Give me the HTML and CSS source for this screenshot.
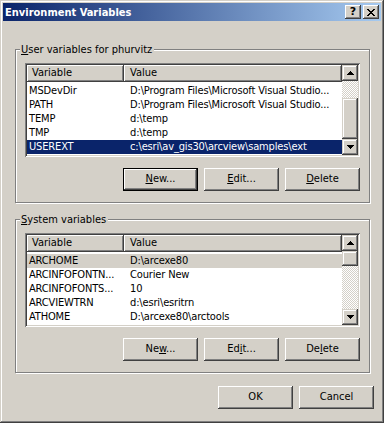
FILE: index.html
```html
<!DOCTYPE html>
<html lang="en">
<head>
    <meta charset="UTF-8">
    <link rel="stylesheet" href="styles.css">
    <title>Environment Variables</title>
</head>
<body>
    <div class="window">
        <div class="titlebar">
            <span class="title">Environment Variables</span>
            <div class="caption-buttons">
                <div class="caption-btn help">?</div>
                <div class="caption-btn">
                    <svg width="8" height="7" viewBox="0 0 8 7" shape-rendering="crispEdges">
                        <path d="M0 0h2v1H0zM6 0h2v1H6zM1 1h2v1H1zM5 1h2v1H5zM2 2h4v1H2zM3 3h2v1H3zM2 4h4v1H2zM1 5h2v1H1zM5 5h2v1H5zM0 6h2v1H0zM6 6h2v1H6z" fill="#000"/>
                    </svg>
                </div>
            </div>
        </div>

        <div class="client">
            <!-- User variables -->
            <div class="group">
                <div class="group-label"><span><u>U</u>ser variables for phurvitz</span></div>
                <div class="listview">
                    <div class="list-main">
                        <div class="list-header">
                            <div class="col-head col-var">Variable</div>
                            <div class="col-head col-val">Value</div>
                        </div>
                        <div class="list-row"><span class="cell var">MSDevDir</span><span class="cell val">D:\Program Files\Microsoft Visual Studio...</span></div>
                        <div class="list-row"><span class="cell var">PATH</span><span class="cell val">D:\Program Files\Microsoft Visual Studio...</span></div>
                        <div class="list-row"><span class="cell var">TEMP</span><span class="cell val">d:\temp</span></div>
                        <div class="list-row"><span class="cell var">TMP</span><span class="cell val">d:\temp</span></div>
                        <div class="list-row selected"><span class="cell var">USEREXT</span><span class="cell val">c:\esri\av_gis30\arcview\samples\ext</span></div>
                    </div>
                    <div class="scrollbar">
                        <div class="sb-btn">
                            <svg width="7" height="4" viewBox="0 0 7 4" shape-rendering="crispEdges"><path d="M3 0h1v1H3zM2 1h3v1H2zM1 2h5v1H1zM0 3h7v1H0z" fill="#000"/></svg>
                        </div>
                        <div class="sb-track track-user-top"></div>
                        <div class="sb-thumb thumb-user"></div>
                        <div class="sb-btn">
                            <svg width="7" height="4" viewBox="0 0 7 4" shape-rendering="crispEdges"><path d="M0 0h7v1H0zM1 1h5v1H1zM2 2h3v1H2zM3 3h1v1H3z" fill="#000"/></svg>
                        </div>
                    </div>
                </div>
                <div class="button-row">
                    <div class="btn default"><u>N</u>ew...</div>
                    <div class="btn"><u>E</u>dit...</div>
                    <div class="btn"><u>D</u>elete</div>
                </div>
            </div>

            <!-- System variables -->
            <div class="group system">
                <div class="group-label"><span><u>S</u>ystem variables</span></div>
                <div class="listview">
                    <div class="list-main">
                        <div class="list-header">
                            <div class="col-head col-var">Variable</div>
                            <div class="col-head col-val">Value</div>
                        </div>
                        <div class="list-row inactive"><span class="cell var">ARCHOME</span><span class="cell val">D:\arcexe80</span></div>
                        <div class="list-row"><span class="cell var">ARCINFOFONTN...</span><span class="cell val">Courier New</span></div>
                        <div class="list-row"><span class="cell var">ARCINFOFONTS...</span><span class="cell val">10</span></div>
                        <div class="list-row"><span class="cell var">ARCVIEWTRN</span><span class="cell val">d:\esri\esritrn</span></div>
                        <div class="list-row"><span class="cell var">ATHOME</span><span class="cell val">D:\arcexe80\arctools</span></div>
                    </div>
                    <div class="scrollbar">
                        <div class="sb-btn">
                            <svg width="7" height="4" viewBox="0 0 7 4" shape-rendering="crispEdges"><path d="M3 0h1v1H3zM2 1h3v1H2zM1 2h5v1H1zM0 3h7v1H0z" fill="#000"/></svg>
                        </div>
                        <div class="sb-thumb thumb-system"></div>
                        <div class="sb-track"></div>
                        <div class="sb-btn">
                            <svg width="7" height="4" viewBox="0 0 7 4" shape-rendering="crispEdges"><path d="M0 0h7v1H0zM1 1h5v1H1zM2 2h3v1H2zM3 3h1v1H3z" fill="#000"/></svg>
                        </div>
                    </div>
                </div>
                <div class="button-row">
                    <div class="btn">Ne<u>w</u>...</div>
                    <div class="btn">Ed<u>i</u>t...</div>
                    <div class="btn">De<u>l</u>ete</div>
                </div>
            </div>

            <div class="dialog-buttons">
                <div class="btn">OK</div>
                <div class="btn">Cancel</div>
            </div>
        </div>
    </div>
</body>
</html>
```

FILE: styles.css
```css
body {
    margin: 0;
    padding: 0;
    background: #d4d0c8;
    font-family: "DejaVu Sans Condensed", "DejaVu Sans", sans-serif;
    font-size: 11px;
    color: #000;
}

/* window frame */
.window {
    width: 384px;
    height: 423px;
    box-sizing: border-box;
    padding: 3px;
    background: #d4d0c8;
    box-shadow: inset -1px -1px #404040, inset 1px 1px #d4d0c8,
                inset -2px -2px #808080, inset 2px 2px #fff;
    display: flex;
    flex-direction: column;
}

.titlebar {
    height: 18px;
    display: flex;
    align-items: center;
    justify-content: space-between;
    background: linear-gradient(to right, #0a246a, #a6caf0);
}

.title {
    color: #fff;
    font-weight: bold;
    padding-left: 2px;
    line-height: 13px;
}

.caption-buttons {
    display: flex;
    gap: 1px;
    padding-right: 2px;
}

.caption-btn {
    width: 16px;
    height: 14px;
    box-sizing: border-box;
    background: #d4d0c8;
    box-shadow: inset -1px -1px #404040, inset 1px 1px #fff,
                inset -2px -2px #808080, inset 2px 2px #d4d0c8;
    display: flex;
    align-items: center;
    justify-content: center;
    margin-left: 1px;
}

.caption-btn.help {
    font-weight: bold;
    font-size: 11px;
    line-height: 14px;
    font-family: "DejaVu Sans", sans-serif;
}

.client {
    padding: 28px 0 0 12px;
}

/* group boxes */
.group {
    width: 355px;
    box-sizing: border-box;
    border: 1px solid #808080;
    box-shadow: inset 1px 1px #fff, 1px 1px #fff;
    padding: 0 9px 11px 9px;
}

.group.system {
    margin-top: 16px;
}

.group-label {
    height: 13px;
    line-height: 13px;
    margin: -7px 0 0 -5px;
}

.group-label span {
    background: #d4d0c8;
    padding: 0 2px 0 1px;
}

/* list view */
.listview {
    margin-top: 7px;
    height: 94px;
    box-sizing: border-box;
    padding: 2px;
    background: #fff;
    box-shadow: inset 1px 1px #808080, inset -1px -1px #fff,
                inset 2px 2px #404040, inset -2px -2px #d4d0c8;
    display: flex;
}

.list-main {
    flex: 1;
    overflow: hidden;
}

.list-header {
    display: flex;
    height: 17px;
    margin-bottom: 2px;
}

.col-head {
    height: 17px;
    line-height: 16px;
    box-sizing: border-box;
    background: #d4d0c8;
    box-shadow: inset -1px -1px #404040, inset 1px 1px #fff,
                inset -2px -2px #808080;
}

.col-var {
    width: 97px;
    padding-left: 5px;
}

.col-val {
    flex: 1;
    padding-left: 6px;
}

.list-row {
    display: flex;
    height: 14px;
    line-height: 14px;
    white-space: nowrap;
    letter-spacing: -0.15px;
}

.list-row.selected {
    background: #0a246a;
    color: #fff;
}

.list-row.inactive {
    background: #d4d0c8;
}

.cell.var {
    width: 95px;
    padding-left: 2px;
}

.cell.val {
    padding-left: 6px;
}

/* scrollbar */
.scrollbar {
    width: 16px;
    display: flex;
    flex-direction: column;
}

.sb-btn,
.sb-thumb {
    background: #d4d0c8;
    box-shadow: inset -1px -1px #404040, inset 1px 1px #d4d0c8,
                inset -2px -2px #808080, inset 2px 2px #fff;
}

.sb-btn {
    height: 16px;
    display: flex;
    align-items: center;
    justify-content: center;
}

.sb-track {
    flex: 1;
    background: repeating-conic-gradient(#fff 0 25%, #d4d0c8 0 50%) 0 0 / 2px 2px;
}

.track-user-top {
    flex: none;
    height: 17px;
}

.thumb-user {
    flex: 1;
}

.thumb-system {
    height: 15px;
}

/* push buttons */
.button-row,
.dialog-buttons {
    display: flex;
    justify-content: flex-end;
    gap: 6px;
}

.button-row {
    margin-top: 11px;
}

.btn {
    width: 75px;
    height: 23px;
    box-sizing: border-box;
    line-height: 22px;
    text-align: center;
    background: #d4d0c8;
    box-shadow: inset -1px -1px #404040, inset 1px 1px #fff,
                inset -2px -2px #808080, inset 2px 2px #d4d0c8;
}

.btn.default {
    border: 1px solid #000;
    line-height: 20px;
    box-shadow: inset -1px -1px #404040, inset 1px 1px #fff,
                inset -2px -2px #808080;
}

.dialog-buttons {
    margin-top: 13px;
    width: 359px;
}
```
